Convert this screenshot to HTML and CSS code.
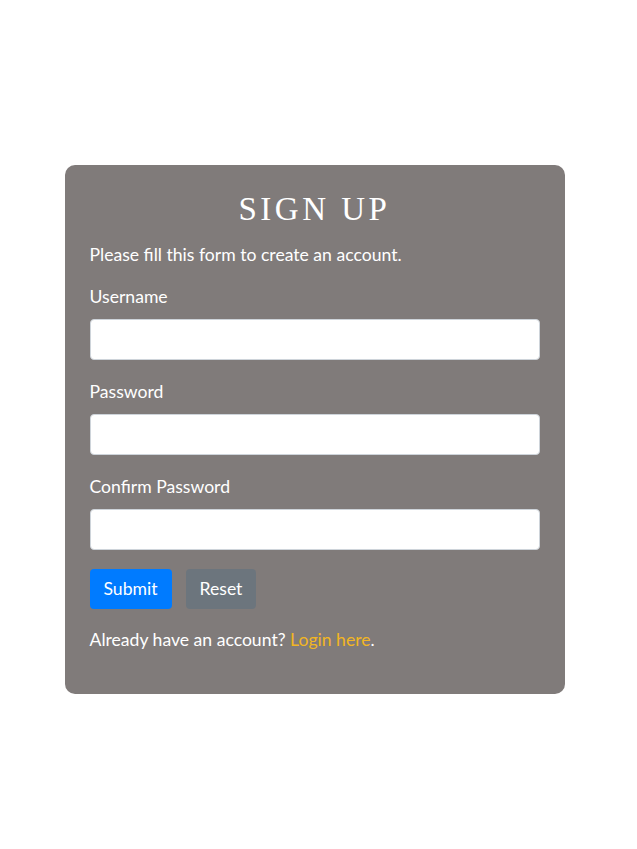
FILE: index.html
```html
<!DOCTYPE html>
<html lang="en">
<head>
<meta charset="utf-8">
<title>Sign Up</title>
<link rel="stylesheet" href="styles.css">
</head>
<body>
<main class="page">
  <section class="card">
    <h2 class="title">SIGN UP</h2>
    <p class="intro">Please fill this form to create an account.</p>
    <form class="form">
      <div class="group">
        <label class="label">Username</label>
        <input class="input" type="text">
      </div>
      <div class="group">
        <label class="label">Password</label>
        <input class="input" type="password">
      </div>
      <div class="group">
        <label class="label">Confirm Password</label>
        <input class="input" type="password">
      </div>
      <div class="actions">
        <button type="button" class="btn btn-primary">Submit</button>
        <button type="button" class="btn btn-secondary">Reset</button>
      </div>
      <p class="footer">Already have an account? <a class="link" href="#">Login here</a>.</p>
    </form>
  </section>
</main>
</body>
</html>
```
FILE: styles.css
```css
* { box-sizing: border-box; }
html, body { margin: 0; padding: 0; background: #fff; }
body {
  font-family: "Lato", "Open Sans", sans-serif;
  font-size: 17.6px;
  color: #fff;
}
.page {
  padding-top: 165px;
  display: flex;
  justify-content: center;
}
.card {
  width: 500px;
  margin-left: -8px;
  background: #807b7a;
  border-radius: 10px;
  padding: 22px 25px 42px;
}
.title {
  margin: 0;
  text-align: center;
  font-family: "Liberation Serif", "DejaVu Serif", serif;
  font-weight: normal;
  font-size: 33px;
  letter-spacing: 3.5px;
  line-height: 44px;
}
.intro {
  margin: 12px 0 18px;
  line-height: 24px;
}
.form { margin: 0; }
.group {
  display: flex;
  flex-direction: column;
  margin-bottom: 20px;
}
.label {
  line-height: 24px;
  margin-bottom: 10px;
}
.input {
  height: 41px;
  border: 1px solid #ced4da;
  border-radius: 4px;
  background: #fff;
  width: 100%;
  font: inherit;
  padding: 6px 12px;
}
.actions {
  display: flex;
  gap: 14px;
  margin-top: -1px;
}
.btn {
  height: 40px;
  border: none;
  border-radius: 4px;
  color: #fff;
  font: inherit;
  padding: 0 14px;
  line-height: 40px;
}
.btn-primary { background: #007bff; }
.btn-secondary { background: #6c757d; }
.footer {
  margin: 19px 0 0;
  line-height: 24px;
}
.link {
  color: #f2b623;
  text-decoration: none;
}
```
